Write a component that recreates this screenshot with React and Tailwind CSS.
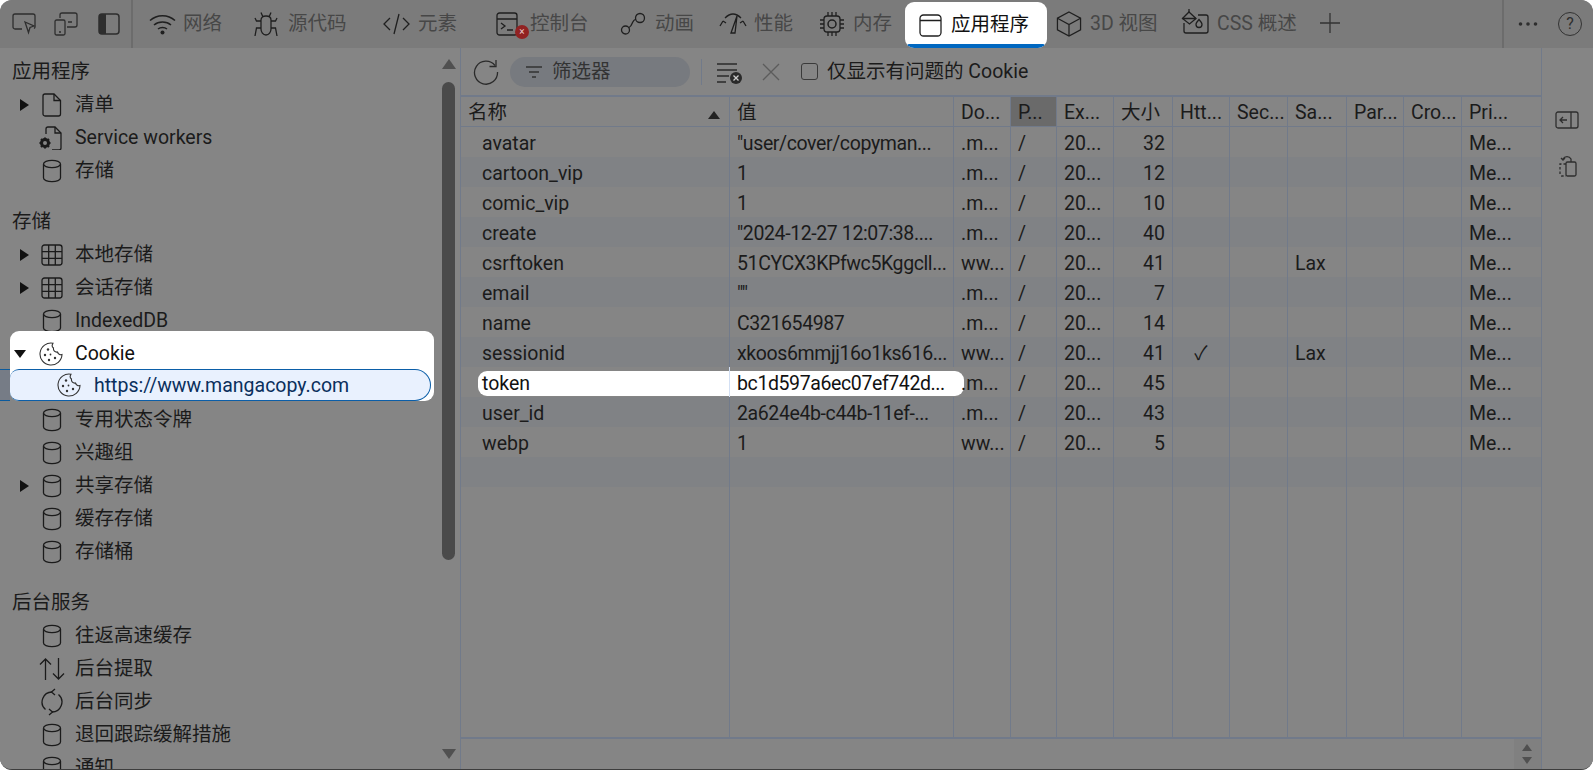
import React from 'react';

const sans = "font-['Roboto','Noto_Sans_CJK_SC',sans-serif]";

function Ico({ w = 24, h = 24, vb = '0 0 24 24', className = '', children }) {
  return (
    <svg width={w} height={h} viewBox={vb} fill="none" stroke="currentColor" strokeWidth="1.3" className={`shrink-0 ${className}`}>
      {children}
    </svg>
  );
}

const Cylinder = () => (
  <Ico w={20} h={24} vb="0 0 20 24">
    <ellipse cx="10" cy="5" rx="8.5" ry="3.6" />
    <path d="M1.5 5v14c0 2 3.8 3.6 8.5 3.6s8.5-1.6 8.5-3.6V5" />
  </Ico>
);
const Doc = () => (
  <Ico w={20} h={24} vb="0 0 20 24">
    <path d="M3 1h9l6.500 6.500V21a2 2 0 0 1-2 2H3a2 2 0 0 1-2-2V3a2 2 0 0 1 2-2z" />
    <path d="M12 1v6.500h6.500" />
  </Ico>
);
const Grid = () => (
  <Ico w={22} h={22} vb="0 0 22 22">
    <rect x="1" y="1" width="20" height="20" rx="2.500" />
    <path d="M7.700 1v20M14.300 1v20M1 7.700h20M1 14.300h20" />
  </Ico>
);
const SwDoc = () => (
  <Ico w={24} h={24} vb="0 0 24 24">
    <path d="M8 8V3a2 2 0 0 1 2-2h7l6 6v15a2 2 0 0 1-2 2h-7" />
    <path d="M17 1v6h6" />
    <circle cx="7" cy="17" r="3.500" strokeWidth="3" />
    <path d="M7 11.500v2M7 20.500v2M1.500 17h2M10.500 17h2M3 13l1.500 1.500M9.500 19.500 11 21M3 21l1.500-1.500M9.500 14.500 11 13" strokeWidth="2" />
  </Ico>
);
const Cookie = () => (
  <Ico w={24} h={24} vb="0 0 24 24">
    <path d="M14 1.200A11 11 0 1 0 23 12.500c-2 .5-4-.5-4.500-2.500-2.500.5-4.500-1.500-4-4-1.500-1-1.500-3.200-.5-4.800z" strokeWidth="1.100" />
    <g fill="currentColor" stroke="none">
      <circle cx="9" cy="7.500" r="1.200" />
      <circle cx="6" cy="13" r="1.200" />
      <circle cx="11.500" cy="12.500" r=".9" />
      <circle cx="16" cy="16" r="1.200" />
      <circle cx="10" cy="18" r="1.200" />
    </g>
  </Ico>
);
const Updown = () => (
  <Ico w={26} h={24} vb="0 0 26 24">
    <path d="M6.500 23V2M1 7.500 6.500 2 12 7.500M19.500 1v21M14 16.500l5.500 5.500 5.500-5.500" />
  </Ico>
);
const Sync = () => (
  <Ico w={24} h={28} vb="0 0 24 28">
    <path d="M12 4A10 10 0 0 0 5.500 21.500M12 24A10 10 0 0 0 18.500 6.500" />
    <path d="M15 1 11.500 4l3.500 3M9 27l3.500-3L9 21" />
  </Ico>
);

const TriRight = () => (
  <span className="h-0 w-0 border-y-[6px] border-l-[9px] border-y-transparent border-l-[#111]" />
);

// one row of the sidebar tree
function Row({ icon, label, arrow }) {
  return (
    <div className="flex h-[33px] shrink-0 items-center whitespace-nowrap">
      <span className="w-[20px] shrink-0" />
      <span className="flex w-[12px] shrink-0 items-center">{arrow && <TriRight />}</span>
      <span className="flex w-[43px] shrink-0 items-center justify-start pl-[10px]">{icon}</span>
      <span>{label}</span>
    </div>
  );
}

function Heading({ children, className = 'h-[33px]' }) {
  return <div className={`flex shrink-0 items-center pl-[12px] ${className}`}>{children}</div>;
}

function Sidebar() {
  return (
    <aside className="relative flex w-[461px] shrink-0 flex-col overflow-hidden border-r border-[#717a8a] bg-[#858585] pt-[7px] text-[19.5px] text-[#1b1b1b]">
      <Heading>应用程序</Heading>
      <Row arrow icon={<Doc />} label="清单" />
      <Row icon={<span className="-ml-[4px]"><SwDoc /></span>} label="Service workers" />
      <Row icon={<Cylinder />} label="存储" />
      <Heading className="mt-[18px] h-[33px]">存储</Heading>
      <Row arrow icon={<span className="-ml-[1px]"><Grid /></span>} label="本地存储" />
      <Row arrow icon={<span className="-ml-[1px]"><Grid /></span>} label="会话存储" />
      <Row icon={<Cylinder />} label="IndexedDB" />

      {/* spotlight on Cookie */}
      <div className="relative z-10 -mt-[6px] mb-[2px] ml-[10px] w-[424px] shrink-0 rounded-[9px] bg-white pt-[6px] text-[#111]">
        <div className="-ml-[10px] flex h-[33px] items-center">
          <span className="ml-[14px] h-0 w-0 border-x-[6px] border-t-[8px] border-x-transparent border-t-[#111]" />
          <span className="ml-[13px] flex w-[36px] shrink-0 text-[#333]"><Cookie /></span>
          <span>Cookie</span>
        </div>
        <div className="-mt-[1px] mr-[3px] flex h-[32px] items-center rounded-r-[16px] rounded-l-[9px] border-y border-r border-[#0b5ea8] bg-[#e9f1fe] pt-[2px] pl-[47px] text-[#0a2f5c]">
          <span className="-mt-[2px] flex w-[37px] shrink-0 text-[#333]"><Cookie /></span>
          <span>https://www.mangacopy.com</span>
        </div>
        <div className="absolute bottom-0 left-[-10px] h-[32px] w-[10px] border-y border-[#0b5a9c] bg-[#767c86]" />
      </div>

      <Row icon={<Cylinder />} label="专用状态令牌" />
      <Row icon={<Cylinder />} label="兴趣组" />
      <Row arrow icon={<Cylinder />} label="共享存储" />
      <Row icon={<Cylinder />} label="缓存存储" />
      <Row icon={<Cylinder />} label="存储桶" />
      <Heading className="mt-[19px] h-[32px]">后台服务</Heading>
      <Row icon={<Cylinder />} label="往返高速缓存" />
      <Row icon={<span className="-ml-[3px]"><Updown /></span>} label="后台提取" />
      <Row icon={<span className="-ml-[2px]"><Sync /></span>} label="后台同步" />
      <Row icon={<Cylinder />} label="退回跟踪缓解措施" />
      <Row icon={<Cylinder />} label="通知" />

      {/* scrollbar */}
      <div className="absolute top-0 right-[5px] bottom-0 flex w-[13px] flex-col items-center">
        <span className="mt-[11px] h-0 w-0 border-x-[7px] border-b-[10px] border-x-transparent border-b-[#505050]" />
        <span className="mt-[13px] h-[478px] w-[13px] rounded-full bg-[#4a4a4a]" />
        <span className="mt-auto mb-[10px] h-0 w-0 border-x-[7px] border-t-[10px] border-x-transparent border-t-[#505050]" />
      </div>
    </aside>
  );
}

function Tab({ icon, label, gap = 'gap-[7px]', width }) {
  return (
    <div className={`flex shrink-0 items-center whitespace-nowrap ${gap}`} style={{ width }}>
      {icon}
      <span>{label}</span>
    </div>
  );
}

function TopBar() {
  return (
    <header className="flex h-[48px] shrink-0 items-center bg-[#7b7b7b] text-[19.5px] text-[#474747]">
      <div className="flex h-full w-[133px] shrink-0 items-center border-r-2 border-[#6c6c6c] pl-[12px] text-[#2e2e2e]">
        <Ico w={24} h={22} vb="0 0 24 22">
          <path d="M10 16H3a2 2 0 0 1-2-2V3a2 2 0 0 1 2-2h18a2 2 0 0 1 2 2v11a2 2 0 0 1-1 1.500" />
          <path d="m13 9 9 4-4 1.500-1.500 5z" />
        </Ico>
        <Ico w={24} h={24} className="ml-[18px]" vb="0 0 24 24">
          <path d="M6 6V3a2 2 0 0 1 2-2h13a2 2 0 0 1 2 2v10a2 2 0 0 1-2 2h-8" />
          <rect x="1" y="8" width="10" height="15" rx="1.500" />
          <path d="M5 20h2M14 10h4" />
        </Ico>
        <svg width="22" height="22" viewBox="0 0 22 22" className="ml-[20px] shrink-0">
          <rect x="1" y="1" width="20" height="20" rx="3" fill="none" stroke="currentColor" strokeWidth="1.500" />
          <path d="M4 1h4v20H4a3 3 0 0 1-3-3V4a3 3 0 0 1 3-3z" fill="currentColor" />
        </svg>
      </div>

      <div className="flex h-full flex-1 items-center pl-[16px]">
        <Tab width="105px" label="网络" icon={
          <Ico w={27} h={22} vb="0 0 27 22" className="text-[#1f1f1f]">
            <path d="M1 7.500c7-6.500 18-6.500 25 0M5 12c4.500-4 12.500-4 17 0M9 16c2.500-2 6.500-2 9 0" strokeWidth="1.500" />
            <circle cx="13.500" cy="19.500" r="2" fill="currentColor" stroke="none" />
          </Ico>
        } />
        <Tab width="129px" gap="gap-[10px]" label="源代码" icon={
          <Ico w={24} h={26} vb="0 0 24 26" className="text-[#1f1f1f]">
            <path d="M7 9c0-2.500 2-4 5-4s5 1.500 5 4v9c0 3-2 6-5 6s-5-3-5-6z" />
            <path d="M7 1.500 9 6M17 1.500 15 6M7 10H2.500L1 7M17 10h4.500L23 7M7 17H2.500L1 25M17 17h4.500L23 25" />
          </Ico>
        } />
        <Tab width="113px" gap="gap-[8px]" label="元素" icon={
          <Ico w={27} h={24} vb="0 0 27 24" className="text-[#1f1f1f]">
            <path d="M7 6 1 12l6 6M20 6l6 6-6 6M16 2l-5 20" />
          </Ico>
        } />
        <div className="relative w-[124px]">
          <Tab gap="gap-[12px]" label="控制台" icon={
            <Ico w={22} h={24} vb="0 0 22 24" className="text-[#1f1f1f]">
              <rect x="1" y="1" width="20" height="22" rx="2.500" />
              <path d="M1 7h20M5 11l4 3-4 3M11 18h6" />
            </Ico>
          } />
          <span className="absolute top-[16px] left-[19px] flex h-[14px] w-[14px] items-center justify-center rounded-full bg-[#912222] text-[10px] leading-none text-[#e8c8c8]">×</span>
        </div>
        <Tab width="99px" gap="gap-[9px]" label="动画" icon={
          <Ico w={26} h={24} vb="0 0 26 24" className="text-[#1f1f1f]">
            <circle cx="5.500" cy="18" r="4" />
            <circle cx="20" cy="6" r="4.500" />
            <path d="M9 15.500c2-1 2.500-2.500 3.500-5s2-3 3.500-3.500" />
          </Ico>
        } />
        <Tab width="100px" gap="gap-[7px]" label="性能" icon={
          <Ico w={28} h={22} vb="0 0 28 22" className="text-[#1f1f1f]">
            <path d="M1 13 4 8M4 8l3 2M27 13l-3-5M24 8l-3 2M6 5c2-2 5-4 8-4s6 2 8 4" />
            <path d="M12 20 18 3l-2 17z" />
          </Ico>
        } />
        <Tab width="86px" gap="gap-[8px]" label="内存" icon={
          <Ico w={26} h={26} vb="0 0 26 26" className="text-[#1f1f1f]">
            <rect x="5" y="5" width="16" height="16" rx="3" />
            <circle cx="13" cy="13" r="4" strokeWidth="1.500" />
            <path d="M9 1v4M13 1v4M17 1v4M9 21v4M13 21v4M17 21v4M1 9h4M1 13h4M1 17h4M21 9h4M21 13h4M21 17h4" />
          </Ico>
        } />

        {/* active tab is spotlit */}
        <div className="relative mt-[2px] flex h-[46px] w-[142px] shrink-0 items-center gap-[9px] self-start overflow-hidden rounded-[9px] bg-white pl-[14px] text-[#111]">
          <Ico w={23} h={23} vb="0 0 23 23" className="text-[#1f1f1f]">
            <rect x="1" y="1" width="21" height="21" rx="3.500" />
            <path d="M1 6.500h21" />
          </Ico>
          <span className="whitespace-nowrap">应用程序</span>
          <span className="absolute right-[2px] bottom-0 left-[2px] h-[4px] rounded-t-[2px] bg-[#0067c0]" />
        </div>

        <Tab width="134px" gap="gap-[8px]" label="3D 视图" icon={
          <Ico w={26} h={28} vb="0 0 27 28" className="ml-[9px] text-[#1f1f1f]">
            <path d="M13.500 1.500 25.500 8v12l-12 6.500L1.500 20V8z" />
            <path d="M1.500 8l12 6.500L25.500 8M13.500 14.500v12" />
          </Ico>
        } />
        <Tab width="138px" gap="gap-[8px]" label="CSS 概述" icon={
          <Ico w={28} h={26} vb="0 0 28 26" className="-mt-[4px] text-[#1f1f1f]">
            <path d="M17 6h8a2 2 0 0 1 2 2v14a2 2 0 0 1-2 2H5a2 2 0 0 1-2-2v-8" />
            <path d="M8 3 15 9.500 8.500 15 1.500 9.500z" />
            <path d="M1.500 9.500H15M8 0v4" />
            <path d="M18 10.500c2 2.200 3 3.500 3 5a3 3 0 0 1-6 0c0-1.500 1-2.800 3-5z" />
          </Ico>
        } />
        <Ico w={22} h={22} vb="0 0 22 22" className="-mt-[3px] text-[#333]">
          <path d="M11 1v20M1 11h20" />
        </Ico>
      </div>

      <div className="flex h-full w-[91px] shrink-0 items-center border-l-2 border-[#6c6c6c] pl-[14px] text-[#2e2e2e]">
        <Ico w={20} h={6} vb="0 0 20 6">
          <g fill="currentColor" stroke="none">
            <circle cx="2.500" cy="3" r="1.800" /><circle cx="10" cy="3" r="1.800" /><circle cx="17.500" cy="3" r="1.800" />
          </g>
        </Ico>
        <span className="ml-[20px] flex h-[24px] w-[24px] items-center justify-center rounded-full border-[1.5px] border-[#333] text-[16px] leading-none">?</span>
      </div>
    </header>
  );
}

const columns = [
  { label: '名称', w: 'w-[269px]' },
  { label: '值', w: 'w-[224px]' },
  { label: 'Do...', w: 'w-[57px]' },
  { label: 'P...', w: 'w-[46px]', sorted: true },
  { label: 'Ex...', w: 'w-[57px]' },
  { label: '大小', w: 'w-[59px]' },
  { label: 'Htt...', w: 'w-[57px]' },
  { label: 'Sec...', w: 'w-[58px]' },
  { label: 'Sa...', w: 'w-[59px]' },
  { label: 'Par...', w: 'w-[57px]' },
  { label: 'Cro...', w: 'w-[58px]' },
  { label: 'Pri...', w: 'flex-1' },
];

const cookies = [
  ['avatar', '"user/cover/copyman...', '.m...', '32', '', '', 'Me...'],
  ['cartoon_vip', '1', '.m...', '12', '', '', 'Me...'],
  ['comic_vip', '1', '.m...', '10', '', '', 'Me...'],
  ['create', '"2024-12-27 12:07:38....', '.m...', '40', '', '', 'Me...'],
  ['csrftoken', '51CYCX3KPfwc5Kggcll...', 'ww...', '41', '', 'Lax', 'Me...'],
  ['email', '""', '.m...', '7', '', '', 'Me...'],
  ['name', 'C321654987', '.m...', '14', '', '', 'Me...'],
  ['sessionid', 'xkoos6mmjj16o1ks616...', 'ww...', '41', '✓', 'Lax', 'Me...'],
  ['token', 'bc1d597a6ec07ef742d...', '.m...', '45', '', '', 'Me...'],
  ['user_id', '2a624e4b-c44b-11ef-...', '.m...', '43', '', '', 'Me...'],
  ['webp', '1', 'ww...', '5', '', '', 'Me...'],
];

function Cell({ w, className = '', children }) {
  return <div className={`${w} flex h-full shrink-0 items-center overflow-hidden border-r border-[#717a8a] px-[7px] whitespace-nowrap last:border-r-0 ${className}`}>{children}</div>;
}

function CookieRow({ c, i }) {
  const [name, value, domain, size, http, same, pri] = c;
  const bg = i % 2 === 0 ? 'bg-[#858585]' : 'bg-[#808285]';
  const spot = name === 'token';
  return (
    <div className={`relative flex h-[30px] shrink-0 ${bg}`}>
      {spot && <div className="absolute top-[4px] left-[17px] h-[25px] w-[486px] rounded-[9px] bg-white" />}
      <Cell w="w-[269px]" className={`relative pt-[4px] pl-[21px] ${spot ? 'border-r-[#d3e0f4] text-[#111]' : ''}`}>{name}</Cell>
      <Cell w="w-[224px]" className={`relative pt-[4px] pr-0 tracking-[-0.02em] ${spot ? 'border-r-transparent text-[#111]' : ''}`}>{value}</Cell>
      <Cell w="w-[57px]" className="relative pt-[4px]">{domain}</Cell>
      <Cell w="w-[46px]" className="pt-[4px]">/</Cell>
      <Cell w="w-[57px]" className="pt-[4px]">20...</Cell>
      <Cell w="w-[59px]" className="justify-end pt-[4px]">{size}</Cell>
      <Cell w="w-[57px]" className="justify-center pt-[4px]">{http}</Cell>
      <Cell w="w-[58px]" />
      <Cell w="w-[59px]" className="pt-[4px]">{same}</Cell>
      <Cell w="w-[57px]" />
      <Cell w="w-[58px]" />
      <Cell w="flex-1" className="pt-[4px]">{pri}</Cell>
    </div>
  );
}

function CookieTable() {
  return (
    <div className="flex flex-1 flex-col overflow-hidden border-y-2 border-[#717a8a]">
      <div className="flex h-[30px] shrink-0 border-b border-[#717a8a] bg-[#858585]">
        {columns.map((col) => (
          <Cell key={col.label} w={col.w} className={`relative pt-[2px] ${col.sorted ? 'bg-[#6a6a6a]' : ''}`}>
            {col.label}
            {col.label === '名称' && <span className="absolute top-[14px] right-[9px] h-0 w-0 border-x-[6px] border-b-[8px] border-x-transparent border-b-[#222]" />}
          </Cell>
        ))}
      </div>
      {cookies.map((c, i) => <CookieRow key={c[0]} c={c} i={i} />)}
      <div className="flex h-[30px] shrink-0 bg-[#808285]">
        {columns.map((col) => <Cell key={col.label} w={col.w} />)}
      </div>
      <div className="flex flex-1 bg-[#858585]">
        {columns.map((col) => <Cell key={col.label} w={col.w} />)}
      </div>
    </div>
  );
}

function Toolbar() {
  return (
    <div className="flex h-[47px] shrink-0 items-center text-[19.5px] text-[#1b1b1b]">
      <Ico w={26} h={26} vb="0 0 26 26" className="ml-[12px] text-[#2a2a2a]">
        <path d="M22 6.500A11.500 11.500 0 1 0 24.500 13" />
        <path d="M23 1v6.500h-6.500" />
      </Ico>
      <div className="ml-[11px] flex h-[30px] w-[180px] items-center rounded-full bg-[#777a7f] pl-[16px] text-[#333]">
        <Ico w={16} h={14} vb="0 0 16 14"><path d="M0 2h16M3 7h10M6 12h4" strokeWidth="1.500" /></Ico>
        <span className="ml-[10px]">筛选器</span>
      </div>
      <span className="ml-[11px] h-[26px] w-px bg-[#717a8a]" />
      <svg width="27" height="24" viewBox="0 0 27 24" className="ml-[14px] shrink-0 text-[#2a2a2a]">
        <path d="M1 4h20M1 10h20M1 16h12M1 22h9" stroke="currentColor" strokeWidth="1.400" />
        <circle cx="20" cy="18" r="6" fill="currentColor" />
        <path d="m17.500 15.500 5 5m0-5-5 5" stroke="#ccc" strokeWidth="1.300" />
      </svg>
      <Ico w={18} h={18} vb="0 0 18 18" className="ml-[19px] text-[#5c5c5c]"><path d="M1 1l16 16M17 1 1 17" /></Ico>
      <span className="ml-[21px] h-[17px] w-[17px] rounded-[3px] border-[1.5px] border-[#3a3a3a]" />
      <span className="ml-[9px] whitespace-nowrap">仅显示有问题的 Cookie</span>
    </div>
  );
}

function RightRail() {
  return (
    <div className="flex w-[52px] shrink-0 flex-col items-center border-l border-[#717a8a] bg-[#858585] pt-[63px] text-[#2e2e2e]">
      <Ico w={24} h={18} vb="0 0 24 18" className="mr-[2px]">
        <rect x="1" y="1" width="22" height="16" rx="2" />
        <path d="M16 1v16M12 9H5M8 6 5 9l3 3" />
      </Ico>
      <Ico w={18} h={24} vb="0 0 18 24" className="mt-[24px]">
        <rect x="7" y="9" width="10" height="14" rx="1.500" />
        <path d="M7 11H1v10a2 2 0 0 0 2 2h4" strokeDasharray="2.500 2" />
        <path d="M4 6a4.500 4.500 0 0 1 8 0v3M2 5l2 2 2-2" />
      </Ico>
    </div>
  );
}

export default function App() {
  return (
    <div className={`h-[770px] w-[1593px] overflow-hidden bg-white ${sans}`}>
      <div className="flex h-full flex-col overflow-hidden rounded-[12px] border-b border-[#3d3d3d] bg-[#858585]">
        <TopBar />
        <div className="flex min-h-0 flex-1">
          <Sidebar />
          <div className="flex w-[1080px] shrink-0 flex-col bg-[#858585] text-[19.5px] text-[#1b1b1b]">
            <Toolbar />
            <CookieTable />
            <div className="flex h-[30px] shrink-0 justify-end">
              <div className="flex w-[27px] flex-col items-center justify-center gap-[6px] bg-[#808080] pr-[2px]">
                <span className="h-0 w-0 border-x-[5px] border-b-[7px] border-x-transparent border-b-[#505050]" />
                <span className="h-0 w-0 border-x-[5px] border-t-[7px] border-x-transparent border-t-[#505050]" />
              </div>
            </div>
          </div>
          <RightRail />
        </div>
      </div>
    </div>
  );
}
